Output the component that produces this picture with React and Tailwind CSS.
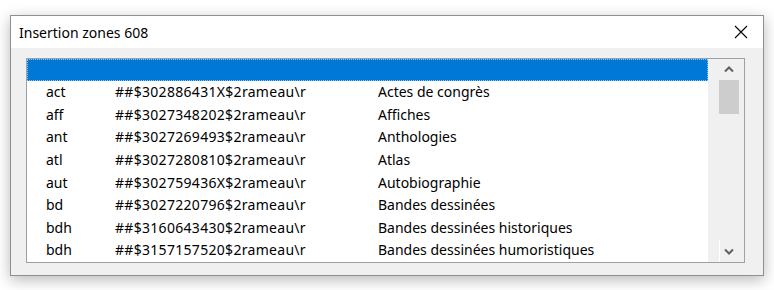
const rows = [
  ["act", "##$302886431X$2rameau\\r", "Actes de congrès"],
  ["aff", "##$3027348202$2rameau\\r", "Affiches"],
  ["ant", "##$3027269493$2rameau\\r", "Anthologies"],
  ["atl", "##$3027280810$2rameau\\r", "Atlas"],
  ["aut", "##$302759436X$2rameau\\r", "Autobiographie"],
  ["bd", "##$3027220796$2rameau\\r", "Bandes dessinées"],
  ["bdh", "##$3160643430$2rameau\\r", "Bandes dessinées historiques"],
  ["bdh", "##$3157157520$2rameau\\r", "Bandes dessinées humoristiques"],
];

export default function App() {
  return (
    <div className="w-[774px] h-[290px] bg-white pl-[10px] pt-[15px]" style={{ fontFamily: '"Segoe UI", "Noto Sans", sans-serif' }}>
      <div className="w-[754px] h-[261px] border border-[#8f8f8f] bg-[#f0f0f0] flex flex-col shadow-[0_4px_14px_rgba(0,0,0,0.28)]">
        {/* title bar */}
        <div className="h-[32px] bg-white flex items-center justify-between pl-[8px] pr-[15px] shrink-0">
          <span className="text-[14px] text-black">Insertion zones 608</span>
          <svg width="14" height="14" viewBox="0 0 14 14">
            <path d="M1 1 L13 13 M13 1 L1 13" stroke="#000" strokeWidth="1.1" />
          </svg>
        </div>
        {/* body */}
        <div className="flex-1 pt-[10px] pl-[15px]">
          <div className="w-[719px] h-[205px] border border-[#a0a0a0] bg-white flex">
            <div className="flex-1 flex flex-col text-[14px] text-black">
              <div className="h-[22px] bg-[#0078d7] border border-dotted border-[#9cc3ea] shrink-0" />
              {rows.map((r, i) => (
                <div key={i} className="h-[22.6px] flex items-center leading-none shrink-0">
                  <span className="w-[88px] pl-[19px] shrink-0">{r[0]}</span>
                  <span className="w-[263px] shrink-0 tracking-[0.3px]">{r[1]}</span>
                  <span>{r[2]}</span>
                </div>
              ))}
            </div>
            {/* scrollbar */}
            <div className="w-[36px] bg-[#f0f0f0] flex flex-col items-center shrink-0 relative">
              <div className="h-[21px] w-full flex items-center justify-center pl-[6px]">
                <svg width="10" height="7" viewBox="0 0 10 7">
                  <path d="M1 5.5 L5 1.5 L9 5.5" stroke="#606060" strokeWidth="2" fill="none" />
                </svg>
              </div>
              <div className="w-[20px] h-[34px] bg-[#cdcdcd] ml-[6px]" />
              <div className="flex-1" />
              <div className="h-[21px] w-full flex items-center justify-center pl-[6px]">
                <svg width="10" height="7" viewBox="0 0 10 7">
                  <path d="M1 1.5 L5 5.5 L9 1.5" stroke="#606060" strokeWidth="2" fill="none" />
                </svg>
              </div>
              <div className="absolute left-[11px] bottom-0 w-px h-[22px] bg-white" />
            </div>
          </div>
        </div>
      </div>
    </div>
  );
}
